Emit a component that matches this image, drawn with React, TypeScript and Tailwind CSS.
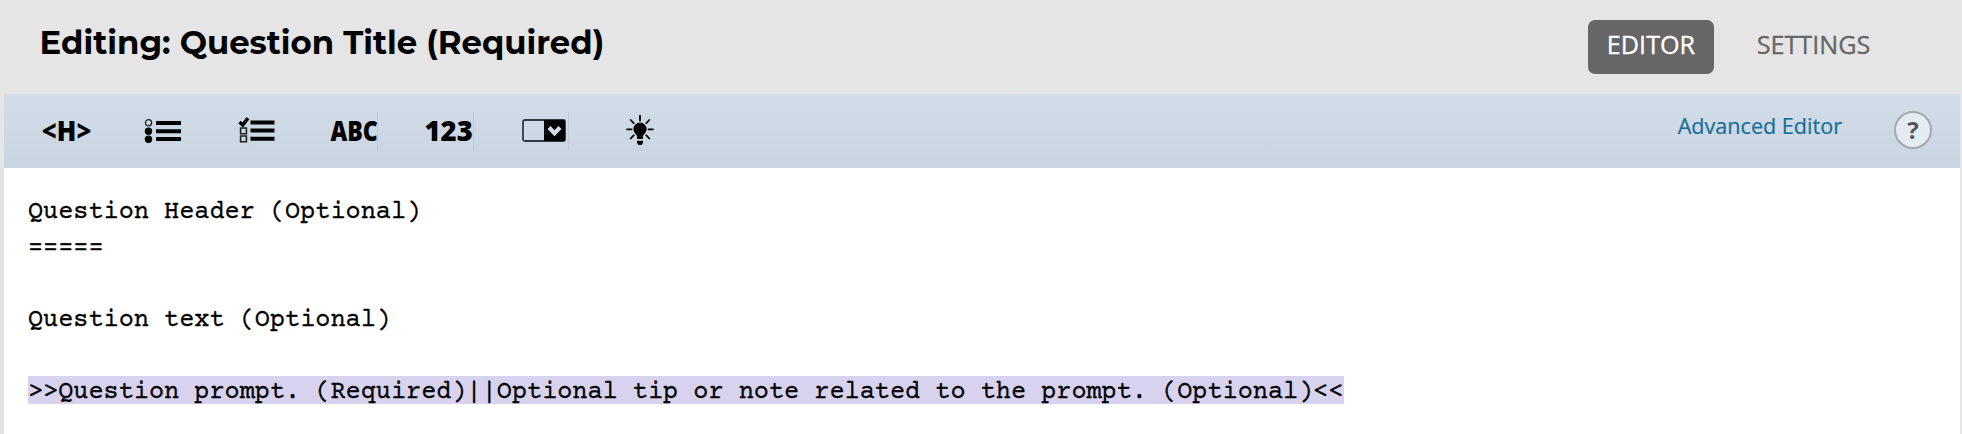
import type { ReactNode } from "react";

function Tool({ label, divider, children }: { label: string; divider?: boolean; children: ReactNode }) {
  return (
    <button aria-label={label} className="flex h-full w-[95.7px] shrink-0 items-center justify-center pb-[1px]">
      <span
        className={
          divider
            ? "flex h-[38px] w-[49px] items-center justify-center border-r border-[#c2ccd8]"
            : "flex h-[38px] w-[49px] items-center justify-center"
        }
      >
        {children}
      </span>
    </button>
  );
}

const glyphText = "whitespace-nowrap font-['Open_Sans'] text-[27.5px] leading-[38px] font-extrabold text-black";

function RadioListIcon() {
  return (
    <svg width="38" height="26" viewBox="0 0 38 26" className="ml-[1px] shrink-0">
      <circle cx="4.500" cy="4.800" r="3.100" fill="none" stroke="#222" strokeWidth="1.300" />
      <circle cx="4.500" cy="13.200" r="3.700" />
      <circle cx="4.500" cy="21.200" r="3.700" />
      <path d="M12 3h25v4H12zM12 11.200h25v4H12zM12 19h25v4H12z" />
    </svg>
  );
}

function CheckListIcon() {
  return (
    <svg width="38" height="27" viewBox="0 0 38 27" className="mr-[2px] shrink-0">
      <path d="M1.500 5.200 4.800 8 10 1.200" fill="none" stroke="#000" strokeWidth="3.600" />
      <path d="M2.600 11h5.800v5.800H2.600zM2.600 19h5.800v5.800H2.600z" fill="none" stroke="#222" strokeWidth="1.600" />
      <path d="M12.500 3.500h24v4h-24zM12.500 11.500h24v4h-24zM12.500 19.700h24v4h-24z" />
    </svg>
  );
}

function DropdownIcon() {
  return (
    <svg width="44" height="23" viewBox="0 0 44 23" className="shrink-0">
      <rect x="1" y="1" width="42" height="21" rx="1.800" fill="none" stroke="#333a42" strokeWidth="1.800" />
      <path d="M22 1h19.500q1.500 0 1.500 1.500v18q0 1.500-1.500 1.500H22z" />
      <path d="m27 8.500 5.500 5.800 5.500-5.800" fill="none" stroke="#d3dce6" strokeWidth="4.200" />
    </svg>
  );
}

function BulbIcon() {
  return (
    <svg width="28" height="31" viewBox="0 0 28 31" className="shrink-0">
      <path d="M14 7.500a6.600 6.600 0 0 1 6.600 6.600c0 3.500-3 5-3.600 7.500v2.400h-6v-2.400c-.6-2.500-3.600-4-3.600-7.500A6.600 6.600 0 0 1 14 7.500z" />
      <path d="M11 25.800h6v2.200l-1.500 2h-3L11 28z" />
      <path
        d="M14 .5v5M1 14.300h4.500M22.500 14.300H27M4.700 5l3 3.200M23.300 5l-3 3.200M4.700 23.500l3-3.200M23.300 23.500l-3-3.200"
        stroke="#000"
        strokeWidth="1.800"
        strokeLinecap="round"
      />
    </svg>
  );
}

export default function App() {
  return (
    <div className="flex h-[434px] w-[1962px] flex-col overflow-hidden bg-[#e5e5e5]">
      <header className="flex h-[94px] shrink-0 items-start justify-between pr-[72px] pl-[39.500px]">
        <h1 className="mt-[21px] font-[Montserrat,Inter,sans-serif] text-[32.35px] leading-[44px] font-bold whitespace-nowrap text-black">
          Editing: Question Title (Required)
        </h1>
        <nav className="mt-[20px] flex gap-[23px] font-['Open_Sans'] text-[25.2px] leading-[48px]">
          <button className="h-[54px] w-[126px] rounded-[7px] bg-[#666] pb-[6px] text-white [-webkit-text-stroke:0.3px]">EDITOR</button>
          <button className="h-[54px] w-[153px] pb-[6px] text-[#666] [-webkit-text-stroke:0.3px]">SETTINGS</button>
        </nav>
      </header>
      <main className="mr-[2px] ml-[4px] flex grow flex-col bg-white">
        <div className="flex h-[74px] shrink-0 items-center justify-between bg-linear-to-b from-[#d3dde8] to-[#c8d4e1] pr-[28px] pl-[14.500px]">
          <div className="flex h-[74px]">
            <Tool label="Header"><span className={`${glyphText} scale-x-[0.93]`}>&lt;H&gt;</span></Tool>
            <Tool label="Single choice"><RadioListIcon /></Tool>
            <Tool label="Multiple choice"><CheckListIcon /></Tool>
            <Tool label="Text" divider><span className={`${glyphText} ml-[2px] scale-x-[0.84]`}>ABC</span></Tool>
            <Tool label="Number" divider><span className={glyphText}>123</span></Tool>
            <Tool label="Dropdown" divider><DropdownIcon /></Tool>
            <Tool label="Hint"><BulbIcon /></Tool>
          </div>
          <div className="flex items-center gap-[52px]">
            <a className="pb-[11px] font-['Open_Sans'] text-[21.6px] leading-[30px] text-[#156f9c] [-webkit-text-stroke:0.2px]">Advanced Editor</a>
            <button className="-mt-[2px] flex size-[38px] items-center justify-center rounded-full border-2 border-[#a5a8ac] bg-[#e5ebf3] pb-[1px] font-['Open_Sans'] text-[24px] leading-none font-bold text-[#50565c]">
              ?
            </button>
          </div>
        </div>
        <div className="pt-[27px] pl-[24px] font-['Courier_Prime','Courier_New','Liberation_Mono',monospace] text-[25.23px] leading-[36px] whitespace-pre text-black [-webkit-text-stroke:0.3px]">
          <div>Question Header (Optional)</div>
          <div>=====</div>
          <div className="h-[36px]" />
          <div>Question text (Optional)</div>
          <div className="h-[36px]" />
          <div className="-mt-[3px] flex h-[36px] items-center">
            <span className="h-[28px] bg-[#d7d3ee] leading-[34px]">
              &gt;&gt;Question prompt. (Required)||Optional tip or note related to the prompt. (Optional)&lt;&lt;
            </span>
          </div>
        </div>
      </main>
    </div>
  );
}
